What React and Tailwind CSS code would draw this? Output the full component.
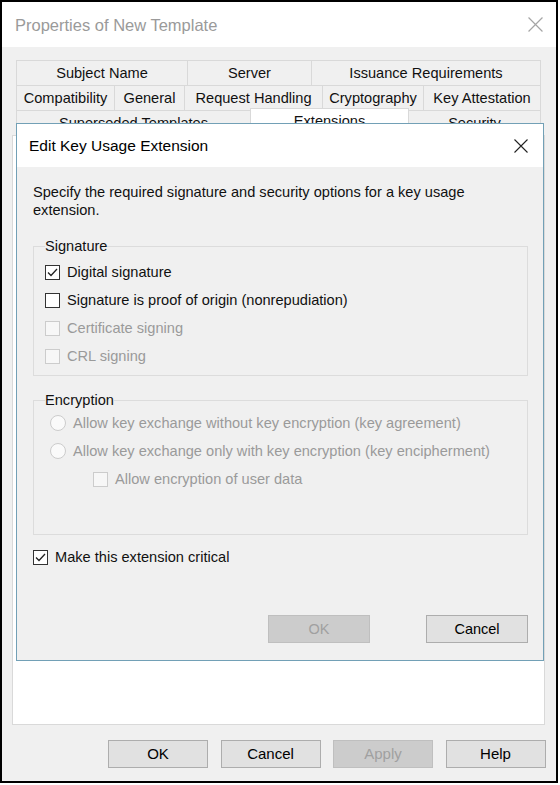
import React from "react";

const tabRows = [
    [
        { label: "Subject Name", w: "w-[171px]" },
        { label: "Server", w: "w-[124px]" },
        { label: "Issuance Requirements", w: "w-[230px]" },
    ],
    [
        { label: "Compatibility", w: "w-[98px]" },
        { label: "General", w: "w-[70px]" },
        { label: "Request Handling", w: "w-[138px]" },
        { label: "Cryptography", w: "w-[101px]" },
        { label: "Key Attestation", w: "w-[118px]" },
    ],
];

function CloseIcon({ color, size }) {
    return (
        <svg width={size} height={size} viewBox="0 0 14 14">
            <path
                d="M0.5 0.5 L13.5 13.5 M13.5 0.5 L0.5 13.5"
                stroke={color}
                strokeWidth="1.1"
                fill="none"
            />
        </svg>
    );
}

function CheckBox({ checked, disabled }) {
    return (
        <span
            className={
                disabled
                    ? "w-[15px] h-[15px] shrink-0 border border-[#cccccc] bg-[#f7f7f7] flex items-center justify-center"
                    : "w-[15px] h-[15px] shrink-0 border border-[#333333] bg-white flex items-center justify-center"
            }
        >
            {checked && (
                <svg width="13" height="13" viewBox="0 0 13 13">
                    <path
                        d="M2 6.5 L5 9.5 L11 3"
                        stroke="#222222"
                        strokeWidth="1.3"
                        fill="none"
                    />
                </svg>
            )}
        </span>
    );
}

function Radio() {
    return (
        <span className="w-[16px] h-[16px] shrink-0 rounded-full border border-[#cccccc] bg-[#fafafa]" />
    );
}

function Row({ children, className }) {
    return (
        <div className={"h-[28px] flex items-center gap-[7px] " + (className || "")}>
            {children}
        </div>
    );
}

function WinButton({ children, disabled, size }) {
    return (
        <div
            className={
                (disabled
                    ? "bg-[#cccccc] border-[#bfbfbf] text-[#a0a0a0] "
                    : "bg-[#e1e1e1] border-[#adadad] text-black ") +
                "h-[28px] border flex items-center justify-center " +
                size
            }
        >
            {children}
        </div>
    );
}

export default function App() {
    return (
        <div className="w-[560px] h-[785px] bg-white font-['Liberation_Sans',Arial,sans-serif] text-[14.6px] leading-[18px] text-[#111111]">
            <div className="relative w-[558px] h-[783px] border-2 border-black bg-[#f0f0f0] flex flex-col overflow-hidden">
                {/* window title bar */}
                <div className="h-[45px] bg-white flex items-center justify-between pl-[13px] pr-[13px] shrink-0">
                    <span className="text-[16.5px] text-[#9a9a9a]">
                        Properties of New Template
                    </span>
                    <CloseIcon color="#a5a5a5" size={15} />
                </div>

                {/* tabs */}
                <div className="pt-[13px] pl-[14px]">
                    {tabRows.map((row, i) => (
                        <div key={i} className="flex h-[25px]">
                            {row.map((tab, j) => (
                                <div
                                    key={tab.label}
                                    className={
                                        "h-full border-t border-l border-[#d9d9d9] flex items-center justify-center whitespace-nowrap " +
                                        tab.w +
                                        (j === row.length - 1 ? " border-r" : "")
                                    }
                                >
                                    {tab.label}
                                </div>
                            ))}
                        </div>
                    ))}
                    <div className="flex h-[25px] items-end">
                        <div className="w-[234px] h-[25px] border-t border-l border-[#d9d9d9] flex justify-center pt-[3px]">
                            Superseded Templates
                        </div>
                        <div className="w-[159px] h-[27px] border-t border-l border-r border-[#d9d9d9] bg-white flex justify-center pt-[3px]">
                            Extensions
                        </div>
                        <div className="w-[132px] h-[25px] border-t border-r border-[#d9d9d9] flex justify-center pt-[3px]">
                            Security
                        </div>
                    </div>
                </div>

                {/* tab panel */}
                <div className="ml-[10px] w-[533px] h-[590px] bg-white border border-[#d9d9d9] shrink-0" />

                {/* bottom buttons */}
                <div className="mt-[15px] pl-[106px] flex gap-[12.5px] text-[15px]">
                    <WinButton size="w-[100px]">OK</WinButton>
                    <WinButton size="w-[100px]">Cancel</WinButton>
                    <WinButton size="w-[100px]" disabled>
                        Apply
                    </WinButton>
                    <WinButton size="w-[100px]">Help</WinButton>
                </div>

                {/* Edit Key Usage Extension dialog */}
                <div className="absolute left-[14px] top-[121px] w-[528px] h-[538px] border border-[#72a0b6] flex flex-col">
                    <div className="h-[43px] bg-white flex items-center justify-between pl-[12px] pr-[15px] shrink-0">
                        <span className="text-[15.5px] text-black">
                            Edit Key Usage Extension
                        </span>
                        <CloseIcon color="#222222" size={14} />
                    </div>

                    <div className="flex-1 bg-[#f0f0f0] pt-[16px] pl-[16px] pr-[15px]">
                        <p className="whitespace-nowrap">
                            Specify the required signature and security options for a key usage
                            <br />
                            extension.
                        </p>

                        <fieldset className="mt-[18px] border border-[#dcdcdc] pl-[11px] pr-[11px] pb-[5px]">
                            <legend className="leading-[18px]">Signature</legend>
                            <div className="pt-[3px]">
                                <Row>
                                    <CheckBox checked />
                                    <span>Digital signature</span>
                                </Row>
                                <Row>
                                    <CheckBox />
                                    <span>Signature is proof of origin (nonrepudiation)</span>
                                </Row>
                                <Row className="text-[#9a9a9a]">
                                    <CheckBox disabled />
                                    <span>Certificate signing</span>
                                </Row>
                                <Row className="text-[#9a9a9a]">
                                    <CheckBox disabled />
                                    <span>CRL signing</span>
                                </Row>
                            </div>
                        </fieldset>

                        <fieldset className="mt-[15px] border border-[#dcdcdc] pl-[11px] pr-[11px] pb-[41px] text-[#9a9a9a]">
                            <legend className="leading-[18px] text-[#111111]">Encryption</legend>
                            <Row className="ml-[5px]">
                                <Radio />
                                <span className="whitespace-nowrap">Allow key exchange without key encryption (key agreement)</span>
                            </Row>
                            <Row className="ml-[5px]">
                                <Radio />
                                <span className="whitespace-nowrap">Allow key exchange only with key encryption (key encipherment)</span>
                            </Row>
                            <Row className="ml-[48px]">
                                <CheckBox disabled />
                                <span>Allow encryption of user data</span>
                            </Row>
                        </fieldset>

                        <Row className="mt-[8px]">
                            <CheckBox checked />
                            <span>Make this extension critical</span>
                        </Row>

                        <div className="mt-[44px] flex justify-end gap-[56px] text-[14.5px]">
                            <WinButton size="w-[102px]" disabled>
                                OK
                            </WinButton>
                            <WinButton size="w-[102px]">Cancel</WinButton>
                        </div>
                    </div>
                </div>
            </div>
        </div>
    );
}
